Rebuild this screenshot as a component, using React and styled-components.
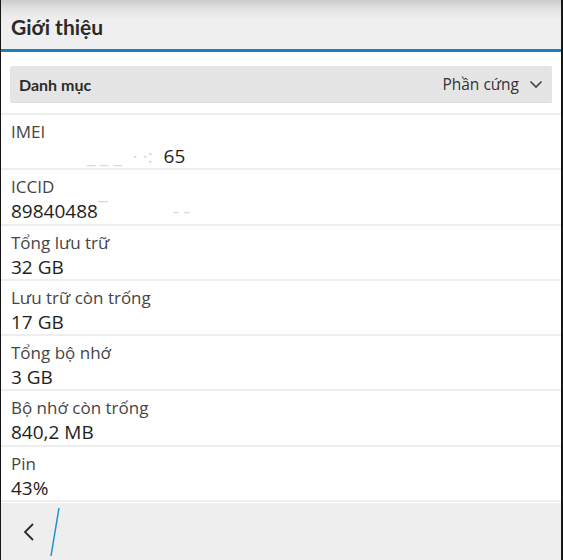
import React from 'react'
import styled, { createGlobalStyle } from 'styled-components'

const Global = createGlobalStyle`
  html, body { margin: 0; padding: 0; background: #161616; }
  body { font-family: "Open Sans", "Noto Sans", sans-serif; }
`

const Screen = styled.div`
  margin: 0 2px 0 1px;
  height: 560px;
  background: #fff;
  display: flex;
  flex-direction: column;
`

const TitleBar = styled.header`
  height: 52px;
  flex: none;
  display: flex;
  align-items: center;
  padding: 4px 10px 0;
  box-sizing: border-box;
  background: linear-gradient(#cbcbcb 0, #e4e4e4 10px, #efefef 20px, #efefef 100%);
  border-bottom: 3px solid #1b80bb;

  h1 {
    margin: 0;
    font-family: Lato, "Open Sans", sans-serif;
    font-size: 21px;
    font-weight: 700;
    color: #2a2a2a;
  }
`

const Content = styled.main`
  flex: 1;
  display: flex;
  flex-direction: column;
  padding-top: 14px;
`

const Picker = styled.div`
  margin: 0 9px;
  height: 36px;
  display: flex;
  align-items: center;
  justify-content: space-between;
  padding: 0 9px 0 9px;
  background: #e5e5e5;
  border-radius: 2px;
  box-shadow: 0 1px 0 #dcdcdc;

  strong {
    font-family: Lato, "Open Sans", sans-serif;
    font-size: 16px;
    font-weight: 700;
    color: #2b2b2b;
  }
`

const PickerValue = styled.span`
  display: flex;
  align-items: center;
  gap: 10px;
  font-size: 15.5px;
  color: #333;
`

const List = styled.div`
  margin-top: 11px;
  border-top: 2px solid #eeeeee;
`

const Row = styled.div`
  height: 55.3px;
  padding: 4px 10px 0;
  box-sizing: border-box;
  border-bottom: 2px solid #eeeeee;
  display: flex;
  flex-direction: column;
`

const Label = styled.span`
  font-size: 17px;
  line-height: 25px;
  color: #454545;
`

const Value = styled.span`
  font-size: 19px;
  line-height: 25px;
  color: #1e1e1e;
`

const Hidden = styled.span`
  color: ${p => p.faint ? '#d8d8d8' : 'transparent'};
`

const ActionBar = styled.footer`
  margin-top: auto;
  height: 57px;
  flex: none;
  background: #eeeeee;
  display: flex;
  align-items: center;
  padding-left: 22px;
  gap: 14px;
`

const rows = [
  { label: 'IMEI', value: <><Hidden>3589360</Hidden><Hidden faint>_ _ _</Hidden><Hidden>0</Hidden><Hidden faint>· ·:</Hidden><Hidden>0</Hidden>65</> },
  { label: 'ICCID', value: <>89840488<Hidden faint>‾</Hidden><Hidden>000000</Hidden><Hidden faint>- -</Hidden></> },
  { label: 'Tổng lưu trữ', value: '32 GB' },
  { label: 'Lưu trữ còn trống', value: '17 GB' },
  { label: 'Tổng bộ nhớ', value: '3 GB' },
  { label: 'Bộ nhớ còn trống', value: '840,2 MB' },
  { label: 'Pin', value: '43%' },
]

export default function App() {
  return (
    <>
      <Global />
      <Screen>
        <TitleBar><h1>Giới thiệu</h1></TitleBar>
        <Content>
          <Picker>
            <strong>Danh mục</strong>
            <PickerValue>
              Phần cứng
              <svg width="14" height="9" viewBox="0 0 14 9">
                <path d="M1.5 1.5 L7 7 L12.5 1.5" fill="none" stroke="#444" strokeWidth="1.6" />
              </svg>
            </PickerValue>
          </Picker>
          <List>
            {rows.map(r => (
              <Row key={r.label}>
                <Label>{r.label}</Label>
                <Value>{r.value}</Value>
              </Row>
            ))}
          </List>
        </Content>
        <ActionBar>
          <svg width="12" height="20" viewBox="0 0 12 20">
            <path d="M10 2 L2 10 L10 18" fill="none" stroke="#2a2a2a" strokeWidth="1.8" />
          </svg>
          <svg width="12" height="50" viewBox="0 0 12 50">
            <path d="M10 1 L2 49" stroke="#1d8fd0" strokeWidth="1.5" />
          </svg>
        </ActionBar>
      </Screen>
    </>
  )
}
